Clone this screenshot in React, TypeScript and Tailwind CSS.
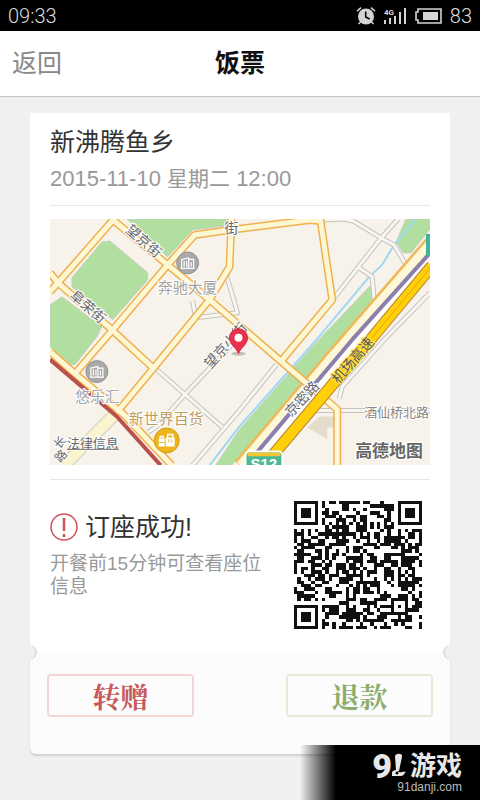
const GREEN = '#b0dfa0';

const QR_SIZE = 37;

function inFinder(x: number, y: number) {
  return (x < 8 && y < 8) || (x > QR_SIZE - 9 && y < 8) || (x < 8 && y > QR_SIZE - 9);
}

function ring(x: number, y: number, cx: number, cy: number) {
  return Math.max(Math.abs(x - cx), Math.abs(y - cy));
}

function buildQr() {
  let seed = 20151110;
  let d = '';
  for (let y = 0; y < QR_SIZE; y++) {
    for (let x = 0; x < QR_SIZE; x++) {
      seed ^= seed << 13;
      seed ^= seed >>> 17;
      seed ^= seed << 5;
      let on = (seed >>> 8) % 100 < 52;
      if (inFinder(x, y)) {
        const r = Math.min(ring(x, y, 3, 3), ring(x, y, QR_SIZE - 4, 3), ring(x, y, 3, QR_SIZE - 4));
        on = r < 2 || r === 3;
      } else if (ring(x, y, 30, 30) < 3) {
        on = ring(x, y, 30, 30) !== 1;
      } else if (x === 6 || y === 6) {
        on = (x + y) % 2 === 0;
      }
      if (on) d += `M${x} ${y}h1v1h-1z`;
    }
  }
  return d;
}

const qrPath = buildQr();

function StatusBar() {
  return (
    <div className="flex h-[31px] items-center justify-between bg-black px-2 text-[#dcdcdc]">
      <span className="font-[Roboto] text-xl font-light">09:33</span>
      <div className="flex items-center gap-2">
        <svg width="20" height="20" viewBox="0 0 20 20" fill="none" aria-label="闹钟">
          <circle cx="10" cy="10.5" r="8" fill="#d4d4d4" />
          <path d="M9.7 5.5v5.5l4 2" stroke="#000" strokeWidth="1.5" />
          <path d="M1 5.2 5 1.6M19 5.2l-4-3.600M4.500 16l-2 2M15.500 16l2 2" stroke="#d4d4d4" strokeWidth="1.5" />
        </svg>
        <svg width="23" height="18" viewBox="0 0 23 18" fill="#d4d4d4" aria-label="信号">
          <text x="0" y="8" fontSize="8" fontWeight="bold" fontFamily="Roboto, sans-serif">4G</text>
          <path d="M0 13h2v4H0zM5 11h2v6H5zM10 9h2v8h-2zM15 5h2v12h-2zM20 1h2v16h-2z" />
        </svg>
        <svg width="27" height="16" viewBox="0 0 27 16" aria-label="电量">
          <path d="M3 1h23v14H3v-3H1V4h2z" fill="none" stroke="#d4d4d4" strokeWidth="1.6" />
          <path d="M8 4h15v8H8z" fill="#d4d4d4" />
        </svg>
        <span className="font-[Roboto] text-xl font-light">83</span>
      </div>
    </div>
  );
}

const mainRoads = [
  'M0 54 8 64 62 111 103 149',
  'M64 0 8 64 0 73',
  'M118 46 63 111 25 155',
  'M62 0 118 46 160 81 232 143 288 191V247',
  'M118 46 145 16 180 11 260 1 272 2',
  'M271 0 283 81 233 141',
  'M182 0 180 48 160 81 105 148 67 194',
  'M0 133 25 155 75 197 122 247',
];

const sideRoads = [
  'M273 1 293 0 304 2 332 19 345 26 357 46',
  'M349 0 332 19 285 79',
  'M310 49 323 58 325 81',
  'M381 74 337 119 293 168 290 180',
  'M267 192H381',
  'M107 151 173 209',
  'M186 122 137 174 107 208 98 214',
  'M227 146 190 192 143 247',
  'M143 82 146 99 188 94 175 50',
];

function Map() {
  return (
    <svg viewBox="0 0 381 247" className="mt-[13px] block h-auto w-full" role="img" aria-label="地图" fontFamily='"Liberation Sans", "Noto Sans CJK SC", sans-serif'>
      <path d="M0 0h381v247H0z" fill="#f7f3eb" />

      <g fill={GREEN} stroke="#c9cfc0" strokeWidth="1">
        <path d="M52 23 60 22 98 54v7L63 101 22 68v-9z" />
        <path d="M0 86 12 78 52 108 47 118 25 146h-5L0 128z" />
        <path d="M77 0 118 38 143 11 175 7 182 0z" />
        <path d="M322 66 325 81 293 119 190 238 182 247h-16l24-36 72-82z" />
        <path d="M357 0h24v10L362 34h-8l-7-11z" />
      </g>
      <path d="M367 0 345 26 333 46 320 58 268 120 190 208 160 247" fill="none" stroke="#9fd8f2" strokeWidth="2" />
      <path d="M270 198h15v11h-7v12l-20-12z" fill="#e5dccb" />

      <g fill="none" strokeLinejoin="round">
        {sideRoads.map((d) => (
          <path key={d} d={d} stroke="#c6c3bf" strokeWidth="5" />
        ))}
        {sideRoads.map((d) => (
          <path key={d} d={d} stroke="#f8f6f1" strokeWidth="3" />
        ))}
        <path d="M67 194 14 247" stroke="#cfcbc0" strokeWidth="13" />
        <path d="M67 194 14 247" stroke="#faf5ce" strokeWidth="11" />

        <path d="M383 22 283 137 190 247" stroke="#f0b858" strokeWidth="13" />
        <path d="M384 24 285 138 192 248" stroke="#fdf8d8" strokeWidth="12" />
        <path d="M384 38 287 150 201 247" stroke="#fffdf8" strokeWidth="10" />
        {mainRoads.map((d) => (
          <path key={d} d={d} stroke="#f0b050" strokeWidth="8" />
        ))}
        {mainRoads.map((d) => (
          <path key={d} d={d} stroke="#fdf8d4" strokeWidth="5" />
        ))}
        <path d="M382 33 303 121 205 237" stroke="#8c7fae" strokeWidth="4" />
        <path d="M383 47 323 119 219 242" stroke="#b9822e" strokeWidth="12" />
        <path d="M383 47 323 119 219 242" stroke="#ffd00a" strokeWidth="10" />
        <path d="M383 47 323 119" stroke="#eaa800" strokeWidth="1" />
        <path d="M0 141 67 198 111 247" stroke="#b9504c" strokeWidth="4" />
      </g>
      <path d="M377 15h4v22h-4z" fill="#42b39c" />

      <g fontSize="14" fill="#666" stroke="#fff" strokeWidth="2" paintOrder="stroke">
        <text transform="translate(75 12) rotate(41)">望京街</text>
        <text transform="translate(19 78) rotate(41)">阜荣街</text>
        <text transform="translate(161 151) rotate(-48)">望京小街</text>
        <text x="175" y="14">街</text>
        <text transform="translate(242 199) rotate(-47)">京密路</text>
        <text transform="translate(289 166) rotate(-49)" fill="#555" stroke="#ffe04a">机场高速</text>
        <text transform="translate(10 245) rotate(-48)" fontSize="12">路</text>
        <text transform="translate(9 231) rotate(-48)" fontSize="12">长</text>
        <text x="315" y="199" fontSize="13" fill="#888">酒仙桥北路</text>
        <text x="17" y="230" fontSize="13">法律信息</text>
      </g>
      <path d="M17 231h52" stroke="#777" />
      <g fontSize="15" fill="#a3a3a3" stroke="#fff" strokeWidth="2" paintOrder="stroke">
        <text x="108" y="74">奔驰大厦</text>
        <text x="25" y="183">悠乐汇</text>
        <text x="79" y="206" fill="#bc9c5e">新世界百货</text>
      </g>
      <text x="306" y="239" fontSize="17" fontWeight="bold" fill="#666" stroke="#fff" strokeWidth="2" paintOrder="stroke">高德地图</text>

      {[
        [138, 44],
        [47, 153],
      ].map(([x, y]) => (
        <g key={x} transform={`translate(${x} ${y})`}>
          <circle r="11" fill="#a9a9a9" stroke="#929292" />
          <path d="M-6 5V-3.500L1-5V5M1-3.500h5V5M-7 5.500H7M-3.500-2v6M-1-2v6M3.500-1v5" fill="none" stroke="#fff" strokeWidth="1.2" />
        </g>
      ))}
      <g transform="translate(117 222)">
        <circle r="12.5" fill="#edb51c" stroke="#d79a12" />
        <path d="M-8-2h6v8h-6zM-1-3h9v9h-9z" fill="#fff" />
        <path d="M-6.500-2v-2h3v2M1-3v-3h5v3" fill="none" stroke="#fff" strokeWidth="1.5" />
        <path d="M-8 2h6M2-1v3M5-1v3" stroke="#edb51c" />
      </g>

      <ellipse cx="189" cy="135" rx="7" ry="2" fill="#8b8b8b" opacity=".5" />
      <path d="M189 135c-2-6-9-9-9-16a9 9 0 0 1 18 0c0 7-7 10-9 16z" fill="#e9304c" stroke="#d4233f" />
      <circle cx="189" cy="119" r="4" fill="#fff" />

      <rect x="196" y="233" width="37" height="20" rx="4" fill="#4bb995" stroke="#fff" strokeWidth="2" />
      <path d="M198 234h33v4h-33z" fill="#f3c631" />
      <text x="201" y="251" fontSize="15" fontWeight="bold" fill="#fff">S12</text>
    </svg>
  );
}

function Watermark() {
  return (
    <div className="absolute right-0 bottom-0 flex h-[55px] w-[180px] flex-col items-end bg-linear-to-r from-transparent to-black to-20% pt-1.5 pr-[18px] text-[#e8e8e8]">
      <div className="flex h-[30px] items-center">
        <span className="font-[Roboto] text-[34px] leading-[30px] font-black">9</span>
        <svg width="14" height="26" viewBox="2 0 14 26" fill="currentColor" aria-hidden="true">
          <path d="M5 3c1-3 8-3 7 1L9 18H6z" />
          <path d="M5 17c-3 1-4 3-3 6h9c3 0 3-3 5-4-3-1-5 1-7 0z" />
          <circle cx="7" cy="20" r="1.5" fill="#000" />
        </svg>
        <span className="ml-1 text-[26px] leading-[30px] font-bold">游戏</span>
      </div>
      <span className="text-xs leading-3 text-[#bbb]">91danji.com</span>
    </div>
  );
}

export default function App() {
  return (
    <div className="relative min-h-screen overflow-hidden bg-[#f0f0f0] font-['Liberation_Sans','Noto_Sans_CJK_SC',sans-serif]">
      <StatusBar />
      <header className="grid h-[66px] grid-cols-3 items-center border-b border-[#c4c4c4] bg-white px-3">
        <button type="button" className="justify-self-start text-[25px] text-[#888]">
          返回
        </button>
        <h1 className="text-center text-[25px] font-bold text-[#111]">饭票</h1>
      </header>

      <main className="mx-[30px] mt-4 mb-[46px]">
        <section className="bg-white px-5 pt-4 pb-[22px]">
          <h2 className="text-[25px] leading-[26px] text-[#333]">新沸腾鱼乡</h2>
          <p className="mt-2 text-[22px] leading-8 text-[#999]">
            2015-11-10 <span className="text-[21px] leading-8">星期二</span> 12:00
          </p>
          <hr className="mt-2.5 border-[#e8e8e8]" />
          <Map />
          <hr className="mt-3.5 border-[#e8e8e8]" />
          <div className="mt-[21px] flex items-start gap-5 pr-2">
            <div className="flex-1 pt-3">
              <h3 className="flex items-center gap-[7px] text-[25px] leading-7 text-[#333]">
                <svg width="28" height="28" viewBox="0 0 28 28" fill="none" stroke="#d2525a" aria-hidden="true">
                  <circle cx="14" cy="14" r="13" strokeWidth="1.5" />
                  <path d="M14 5v13M14 21v3" strokeWidth="2.5" />
                </svg>
                <span>订座成功!</span>
              </h3>
              <p className="mt-[11px] text-[19px] leading-[23px] text-[#999]">开餐前15分钟可查看座位信息</p>
            </div>
            <svg width="128" height="128" viewBox="0 0 37 37" role="img" aria-label="二维码" className="shrink-0">
              <path d={qrPath} fill="#111" shapeRendering="crispEdges" />
            </svg>
          </div>
        </section>

        <section className="relative flex justify-between rounded-b-md bg-[#fcfcfc] px-[17px] pt-[23px] pb-[37px] shadow-[0_2px_2px_#d0d0d0]">
          <span className="absolute -top-1.5 -left-2 size-[15px] rounded-full border-r-2 border-[#dcdcdc] bg-[#f0f0f0]" />
          <span className="absolute -top-1.5 -right-2 size-[15px] rounded-full border-l-2 border-[#dcdcdc] bg-[#f0f0f0]" />
          <button type="button" className="h-[43px] w-[147px] rounded-sm border-2 border-[#f4d6d6] font-['Noto_Serif_CJK_SC','Noto_Sans_CJK_SC',serif] text-[28px] leading-[38px] font-bold text-[#c65a5c]">
            转赠
          </button>
          <button type="button" className="h-[43px] w-[147px] rounded-sm border-2 border-[#e4ecd8] font-['Noto_Serif_CJK_SC','Noto_Sans_CJK_SC',serif] text-[28px] leading-[38px] font-bold text-[#8bae6c]">
            退款
          </button>
        </section>
      </main>
      <Watermark />
    </div>
  );
}
